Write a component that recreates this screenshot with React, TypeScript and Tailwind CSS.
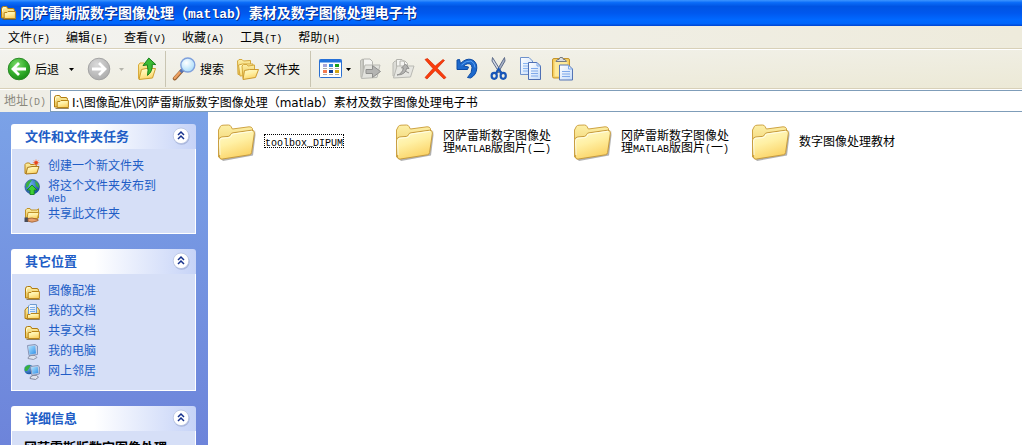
import React from 'react';

interface TextProps {
  children: string;
  latin?: string;
}

// Han characters keep the inherited font, Latin runs use a half-width monospace
const Text: React.FC<TextProps> = ({ children, latin = 'text-[10px]' }) => (
  <>
    {children.split(/([\x21-\x7e]+)/).map((part, i) =>
      i % 2 === 1 ? (
        <span key={i} className={`font-['Liberation_Mono',monospace] leading-[0px] ${latin}`}>{part}</span>
      ) : (
        part
      )
    )}
  </>
);

const Gradients: React.FC = () => (
  <svg className="absolute size-0" aria-hidden="true">
    <defs>
      <linearGradient id="folderFront" x1="0" y1="0" x2="0.4" y2="1">
        <stop offset="0" stopColor="#fffbd0" />
        <stop offset="0.5" stopColor="#fff0a4" />
        <stop offset="1" stopColor="#fbd468" />
      </linearGradient>
      <linearGradient id="folderBack" x1="0" y1="0" x2="0" y2="1">
        <stop offset="0" stopColor="#fdf0a8" />
        <stop offset="1" stopColor="#e9bf4c" />
      </linearGradient>
      <radialGradient id="green" cx="0.4" cy="0.3" r="0.75">
        <stop offset="0" stopColor="#7fdc6c" />
        <stop offset="0.55" stopColor="#36b02e" />
        <stop offset="1" stopColor="#158a12" />
      </radialGradient>
      <radialGradient id="grey" cx="0.4" cy="0.3" r="0.75">
        <stop offset="0" stopColor="#dadada" />
        <stop offset="1" stopColor="#aaaaaa" />
      </radialGradient>
      <radialGradient id="lens" cx="0.4" cy="0.35" r="0.7">
        <stop offset="0" stopColor="#ffffff" />
        <stop offset="1" stopColor="#a5dcfa" />
      </radialGradient>
      <linearGradient id="sheet" x1="0" y1="0" x2="1" y2="1">
        <stop offset="0" stopColor="#ffffff" />
        <stop offset="1" stopColor="#c5dcfa" />
      </linearGradient>
      <linearGradient id="screen" x1="0" y1="0" x2="1" y2="1">
        <stop offset="0" stopColor="#b4e6ff" />
        <stop offset="1" stopColor="#2f8fe8" />
      </linearGradient>
      <radialGradient id="globe" cx="0.35" cy="0.3" r="0.8">
        <stop offset="0" stopColor="#6fb4f0" />
        <stop offset="1" stopColor="#0d4698" />
      </radialGradient>
    </defs>
  </svg>
);

const LargeFolder: React.FC = () => (
  <svg className="h-[38px] w-10 shrink-0" viewBox="0 0 40 38" aria-hidden="true">
    <path d="M4 35 L34 30 L38 6 L38.5 11 L36 31.5 L6 37Z" fill="#666" opacity="0.5" />
    <path d="M1.5 33 V6 L3.5 2.2 Q4 1.4 6 1.2 L11.5 1 Q13.4 1 14.2 2.8 L15.4 5 L32 2.8 Q34.6 2.6 35.4 4.4 L36 11 L5 35Z" fill="url(#folderBack)" stroke="#cfa444" />
    <path d="M5.5 35 Q3.2 36 2.4 33 L1.5 17 Q1.4 13.5 4.6 13 L11.5 12.4 Q12.7 12.2 13.6 10.4 Q14.2 9 16 8.8 L34.5 6.2 Q37.6 6 37.4 9 L34.6 28.6 Q34.4 30.4 32.4 30.8Z" fill="url(#folderFront)" stroke="#c69a3c" />
    <path d="M3 31 L2.6 17 Q2.6 14.4 5 14.2 L12 13.6 Q14 13.4 14.8 11 Q15.3 10.1 16.4 10 L34.8 7.4" fill="none" stroke="#fffee6" />
  </svg>
);

const SmallFolder: React.FC = () => (
  <svg className="size-4 shrink-0" viewBox="0 0 16 16" aria-hidden="true">
    <path d="M1.5 14 V5 Q1.5 2.5 3.5 2.5 H6 Q7.4 2.5 7.8 4.5 H13 Q14.5 4.5 14.5 6.5 V14Z" fill="url(#folderBack)" stroke="#b07c10" />
    <path d="M2.5 7.5 V6 Q2.5 3.8 4 3.8 H6" fill="none" stroke="#fffbd2" />
    <path d="M4.2 14.5 V9 Q4.2 8.5 5 8.5 H7 L8 7.5 H15.4 V14.5Z" fill="url(#folderFront)" stroke="#b98518" />
    <path d="M2.5 15.5 H15.8" stroke="#6f5520" opacity="0.7" />
  </svg>
);

const NewFolderIcon: React.FC = () => (
  <svg className="size-4 shrink-0" viewBox="0 0 16 16" aria-hidden="true">
    <path d="M1 14.5 V5.5 L2.5 4 H5.5 L6.5 5.5 H12.5 V14Z" fill="url(#folderBack)" stroke="#b98518" />
    <path d="M2 15 L3.5 8.5 L8 7.5 H15 L12.8 14.2Z" fill="url(#folderFront)" stroke="#a87820" />
    <path d="M12 0.5 V7 M8.8 3.7 H15.4 M9.8 1.4 L14.4 6 M14.4 1.4 L9.8 6" stroke="#f09060" />
    <circle cx="12.1" cy="3.7" r="1.8" fill="#e8421c" />
  </svg>
);

const PublishIcon: React.FC = () => (
  <svg className="size-4 shrink-0" viewBox="0 0 16 16" aria-hidden="true">
    <circle cx="8.2" cy="7.8" r="7.3" fill="url(#globe)" stroke="#174a86" strokeWidth="0.6" />
    <path d="M2 5 Q4 1 8 1 L6 4 L4 8 L2 9Z M11 1.5 L14.5 5 L15 9 L12 7Z" fill="#38b040" />
    <path d="M8 6 L13 11 H10.2 V15.5 H6 V11 H3Z" fill="#3fcf35" stroke="#0f7e12" strokeWidth="0.8" />
  </svg>
);

const ShareIcon: React.FC = () => (
  <svg className="size-4 shrink-0" viewBox="0 0 16 16" aria-hidden="true">
    <path d="M1.5 11 V3 L3 1.5 H6 L7 3 H13 L14.5 1.8 V11Z" fill="url(#folderBack)" stroke="#c09228" />
    <path d="M3 11.5 L4 5.5 H15 L13.5 11.5Z" fill="url(#folderFront)" stroke="#c09228" />
    <path d="M0.5 10.5 H4 V15 H0.5Z" fill="#484c5a" />
    <path d="M4 11.5 L8 11 L14 12.5 Q15 13.5 13 14 L8 15.2 L4 14.2Z" fill="#e5a06c" stroke="#9b592b" strokeWidth="0.8" />
  </svg>
);

const DocumentsIcon: React.FC = () => (
  <svg className="size-4 shrink-0" viewBox="0 0 16 16" aria-hidden="true">
    <path d="M1 14.5 V6 L3 3.5 H13.5 L15.3 6 V14.5Z" fill="url(#folderBack)" stroke="#b07c10" />
    <path d="M4.5 11 V2 L6 0.5 H12.5 V11Z" fill="url(#sheet)" stroke="#6f9bd0" />
    <path d="M6 3.5 H11 M6 5.5 H11 M6 7.5 H11" stroke="#7fb0ea" />
    <path d="M3.5 14.5 V10.5 H6 L7 9.5 H15.3 V14.5Z" fill="url(#folderFront)" stroke="#b98518" />
    <path d="M2.5 15.5 H15.8" stroke="#6f5520" opacity="0.7" />
  </svg>
);

const ComputerIcon: React.FC = () => (
  <svg className="size-4 shrink-0" viewBox="0 0 16 16" aria-hidden="true">
    <path d="M3.5 1.5 L11 0.5 L13.5 2 V10.5 L5 11.5Z" fill="#c9d2e6" stroke="#8795b8" />
    <path d="M4.3 2.5 L11.2 1.5 L12 9.4 L5.6 10.4Z" fill="url(#screen)" />
    <path d="M7 11.5 H11 L13 13.5 L9.5 15.5 L4 14.5 L4.5 12.8Z" fill="#dde2ee" stroke="#7c849a" strokeWidth="0.8" />
  </svg>
);

const NetworkIcon: React.FC = () => (
  <svg className="size-4 shrink-0" viewBox="0 0 16 16" aria-hidden="true">
    <circle cx="5" cy="5.5" r="4.8" fill="url(#globe)" />
    <path d="M0.8 3.5 Q3 0.6 6.4 1 L5.4 4 L3 7 L1 7Z" fill="#38b040" />
    <path d="M6.5 2.5 L14 1.5 L15.4 2.8 V10 L8 11.5Z" fill="#c9d2e6" stroke="#8795b8" />
    <path d="M7.4 3.4 L13.8 2.6 L14.4 9 L8.5 10.1Z" fill="url(#screen)" />
    <path d="M9 11.4 H12.5 L14.5 13.2 L11.5 15.5 L6 14.5 L6.5 12.8Z" fill="#dde2ee" stroke="#6d7488" strokeWidth="0.8" />
  </svg>
);

const BackIcon: React.FC = () => (
  <svg className="size-6" viewBox="0 0 24 24" aria-hidden="true">
    <circle cx="12" cy="12" r="10.8" fill="url(#green)" stroke="#2c8a28" />
    <path d="M19 12 H7 M12 6 L6 12 L12 18" fill="none" stroke="#fff" strokeWidth="2.8" />
  </svg>
);

const ForwardIcon: React.FC = () => (
  <svg className="size-6" viewBox="0 0 24 24" aria-hidden="true">
    <circle cx="12" cy="12" r="10.8" fill="url(#grey)" stroke="#a4a4a4" />
    <path d="M5 12 H17 M12 6 L18 12 L12 18" fill="none" stroke="#fff" strokeWidth="2.8" />
  </svg>
);

const UpIcon: React.FC = () => (
  <svg className="size-6" viewBox="0 0 24 24" aria-hidden="true">
    <path d="M3.5 21.5 V8 L5 6 H9 L10.5 8 H17 V20Z" fill="url(#folderBack)" stroke="#d9ab3a" />
    <path d="M4 22.5 L6.5 12.5 L11 11.5 H20.5 L17.5 21Z" fill="url(#folderFront)" stroke="#cf9f30" />
    <path d="M13.8 1 L20.8 7.6 L17.2 7.2 Q17.8 14.5 12.5 18.4 Q13.8 13.5 12.2 7.8 L8 8.6Z" fill="#3cbb35" stroke="#17801a" />
  </svg>
);

const SearchIcon: React.FC = () => (
  <svg className="size-6" viewBox="0 0 24 24" aria-hidden="true">
    <path d="M10 13.5 L2.8 21.5" stroke="#97602f" strokeWidth="4" strokeLinecap="round" />
    <path d="M10 13 L2.8 21" stroke="#eda264" strokeWidth="2.4" strokeLinecap="round" />
    <path d="M11 12.5 L8.5 15.2" stroke="#5674b4" strokeWidth="3.4" />
    <circle cx="15.8" cy="8" r="7" fill="url(#lens)" stroke="#7fa0dc" strokeWidth="1.4" />
  </svg>
);

const FoldersIcon: React.FC = () => (
  <svg className="size-6" viewBox="0 0 24 24" aria-hidden="true">
    <path d="M2 17.5 L1.5 4 L3 2.5 H6 L7.5 4 L14.5 3.5 V17Z" fill="url(#folderBack)" stroke="#d5a93c" />
    <path d="M4 19 L2.5 8 L6.5 7 H17 L14 18Z" fill="url(#folderFront)" stroke="#d5a93c" />
    <path d="M7 21.5 L6 9 L7.5 7.5 H11 L12 9 L18.5 8 V20Z" fill="url(#folderBack)" stroke="#d5a93c" />
    <path d="M7 22.5 L8.5 13.5 L13.5 12.5 H22.5 L19.5 20.5Z" fill="url(#folderFront)" stroke="#cc9b30" />
  </svg>
);

const tiles = [
  { x: 4, y: 6, fill: '#a8a6d8' },
  { x: 10, y: 6, fill: '#2f86d8' },
  { x: 16, y: 6, fill: '#1ba01b' },
  { x: 4, y: 12, fill: '#f27b52' },
  { x: 10, y: 12, fill: '#0d3f9a' },
  { x: 16, y: 12, fill: '#d3a515' },
];

const ViewsIcon: React.FC = () => (
  <svg className="h-5 w-6" viewBox="0 0 24 20" aria-hidden="true">
    <rect x="0.5" y="0.5" width="22" height="18" rx="1" fill="#fff" stroke="#2a6fd0" />
    <rect x="0.5" y="0.5" width="22" height="3" fill="#2273dd" />
    {tiles.map((tile) => (
      <g key={`${tile.x}-${tile.y}`}>
        <rect x={tile.x} y={tile.y - 1} width="4" height="3" fill={tile.fill} />
        <path d={`M${tile.x} ${tile.y + 3.5} h4`} stroke="#aaa" />
      </g>
    ))}
  </svg>
);

const MoveToIcon: React.FC = () => (
  <svg className="size-6" viewBox="0 0 24 24" aria-hidden="true">
    <path d="M2 20.5 L1.5 3.5 L4 2 V19Z" fill="#d5d5cf" stroke="#b4b4ae" />
    <path d="M4.5 20 V2 H11 L13.5 4.5 V20Z" fill="#f4f4f1" stroke="#b4b4ae" />
    <path d="M2.5 21.5 L6 8 H21 L18 20.5Z" fill="#e2e2dd" stroke="#b9b9b3" />
    <path d="M7 12.5 H13.5 V8.5 L21.5 14.5 L13.5 20.5 V16.5 H7Z" fill="#b4b4b2" stroke="#8f8f8d" />
  </svg>
);

const CopyToIcon: React.FC = () => (
  <svg className="size-6" viewBox="0 0 24 24" aria-hidden="true">
    <path d="M2 19 V6 L4 4 H8 V20Z" fill="#dcdcd7" stroke="#b9b9b3" />
    <path d="M5.5 18 V2.5 H11 L13.5 5 V18Z M9 19 V4 H14 L16.5 6.5 V19Z" fill="#f4f4f1" stroke="#b4b4ae" />
    <path d="M2.5 21 L6 9 H23 L19.5 20Z" fill="#e6e6e1" stroke="#b9b9b3" />
    <path d="M6 18 Q11 17 12.5 11 L10.5 11 L14.5 7 L18 11.5 L15.7 11.2 Q14.5 18 6 18Z M14 14 L18 16" fill="#b4b4b2" stroke="#8f8f8d" />
  </svg>
);

const DeleteIcon: React.FC = () => (
  <svg className="size-6" viewBox="0 0 24 24" aria-hidden="true">
    <path d="M2 2.5 L4.5 1.5 L12.2 9 L20 2.5 L21.5 3.5 L14.2 11.2 L23 20.5 L21 22 L12.2 13.5 L4 22 L2 20.5 L10 11.5Z" fill="#fa3c0c" stroke="#d52c05" strokeWidth="0.7" />
  </svg>
);

const UndoIcon: React.FC = () => (
  <svg className="size-6" viewBox="0 0 24 24" aria-hidden="true">
    <path d="M2 3 L4.5 2.5 L5.5 6.5 Q11 1 16.5 2.5 Q22 4.5 21.8 11 Q21.5 18 15.5 21 L12.5 20.5 Q17.5 15.5 17 10.5 Q16.5 6.5 12.8 6.7 Q10.5 7 8.7 9 L13.5 10 L12.5 12.5 L2 12.5Z" fill="#1d69cc" stroke="#0b4aa4" />
    <path d="M6.5 8 Q11 3.5 16 4 Q20 6 20 10.5" fill="none" stroke="#5aa0f0" />
  </svg>
);

const CutIcon: React.FC = () => (
  <svg className="size-6" viewBox="0 0 24 24" aria-hidden="true">
    <path d="M5.5 0.5 L14.5 15 L12.5 16 L5 4Z" fill="#d3d9e6" stroke="#5d6b88" />
    <path d="M17.5 0.5 L9 15 L11 16 L18 4Z" fill="#aab4c8" stroke="#5d6b88" />
    <ellipse cx="7.2" cy="18.8" rx="2.6" ry="3" fill="none" stroke="#1856b8" strokeWidth="2.2" />
    <ellipse cx="16.2" cy="18.8" rx="2.6" ry="3" fill="none" stroke="#1856b8" strokeWidth="2.2" />
    <path d="M9 16.5 L11.7 12 L14.5 16.5" fill="none" stroke="#1856b8" strokeWidth="2" />
  </svg>
);

const CopyIcon: React.FC = () => (
  <svg className="size-6" viewBox="0 0 24 24" aria-hidden="true">
    <path d="M1.5 17.5 V0.5 H10 L13.5 4 V17.5Z" fill="url(#sheet)" stroke="#6f92cc" />
    <path d="M4 6.5 H11 M4 9 H11 M4 11.5 H11 M4 14 H11" stroke="#8ab6f2" />
    <path d="M9.5 22.5 V5.5 H18 L21.5 9 V22.5Z" fill="url(#sheet)" stroke="#4f70b4" />
    <path d="M18 5.5 V9 H21.5 M12 11.5 H19 M12 14 H19 M12 16.5 H19 M12 19 H19" fill="none" stroke="#7fa9ea" />
  </svg>
);

const PasteIcon: React.FC = () => (
  <svg className="size-6" viewBox="0 0 24 24" aria-hidden="true">
    <rect x="1.5" y="1.5" width="17" height="19.5" rx="1.5" fill="#f5cd5e" stroke="#c4952d" />
    <rect x="3.5" y="4.5" width="13" height="15" fill="#fde999" />
    <path d="M5 4.5 L6.5 2.5 H8 L9 0.5 H11.5 L12.5 2.5 H14 L15.5 4.5Z" fill="#dadde0" stroke="#777b80" />
    <path d="M8.5 23 V8 H17.5 L21.5 12 V23Z" fill="url(#sheet)" stroke="#5575b5" />
    <path d="M17.5 8 V12 H21.5 M11 14.5 H19 M11 17 H19 M11 19.5 H19" fill="none" stroke="#7fa9ea" />
  </svg>
);

const Caret: React.FC<{ className: string }> = ({ className }) => (
  <svg className={`h-[3px] w-[5px] shrink-0 ${className}`} viewBox="0 0 5 3" aria-hidden="true">
    <path d="M0 0 H5 L2.5 3Z" fill="currentColor" />
  </svg>
);

interface PanelProps {
  title: string;
  children: React.ReactNode;
}

const Panel: React.FC<PanelProps> = ({ title, children }) => (
  <section className="shrink-0">
    <div className="flex h-[25px] items-start justify-between rounded-t-[3px] bg-linear-to-r from-white from-45% to-[#c6d3f7] pt-[3px] pr-1.5 pl-3.5">
      <h2 className="text-[13px] leading-[18px] font-bold text-[#215dc6]">{title}</h2>
      <button type="button" aria-label={`收起${title}`}>
        <svg className="size-[18px]" viewBox="0 0 18 18" aria-hidden="true">
          <circle cx="9.6" cy="9.8" r="8" fill="#8d9cc8" opacity="0.6" />
          <circle cx="9" cy="8.8" r="7.8" fill="#fff" stroke="#b4c0e0" strokeWidth="0.8" />
          <path d="M6 8 L9 5 L12 8 M6 12 L9 9 L12 12" fill="none" stroke="#16318c" strokeWidth="1.5" />
        </svg>
      </button>
    </div>
    <div className="border-x border-b border-white bg-[#d6dff7] px-3 py-2.5">{children}</div>
  </section>
);

interface LinkItem {
  label: string;
  icon: React.ReactNode;
}

const LinkList: React.FC<{ items: LinkItem[] }> = ({ items }) => (
  <ul className="flex flex-col gap-1">
    {items.map((item) => (
      <li key={item.label}>
        <a href="#" className="flex min-h-4 items-start gap-2 text-xs leading-3 text-[#215dc6]">
          {item.icon}
          <span className="max-w-28">
            <Text>{item.label}</Text>
          </span>
        </a>
      </li>
    ))}
  </ul>
);

const menus = ['文件(F)', '编辑(E)', '查看(V)', '收藏(A)', '工具(T)', '帮助(H)'];

const tasks: LinkItem[] = [
  { label: '创建一个新文件夹', icon: <NewFolderIcon /> },
  { label: '将这个文件夹发布到 Web', icon: <PublishIcon /> },
  { label: '共享此文件夹', icon: <ShareIcon /> },
];

const places: LinkItem[] = [
  { label: '图像配准', icon: <SmallFolder /> },
  { label: '我的文档', icon: <DocumentsIcon /> },
  { label: '共享文档', icon: <SmallFolder /> },
  { label: '我的电脑', icon: <ComputerIcon /> },
  { label: '网上邻居', icon: <NetworkIcon /> },
];

const folders = [
  { name: 'toolbox_DIPUM', focused: true },
  { name: '冈萨雷斯数字图像处理MATLAB版图片(二)', focused: false },
  { name: '冈萨雷斯数字图像处理MATLAB版图片(一)', focused: false },
  { name: '数字图像处理教材', focused: false },
];

const App: React.FC = () => {
  return (
    <div className="flex h-screen flex-col overflow-hidden bg-white font-['Noto_Sans_CJK_SC',sans-serif] text-xs text-black">
      <Gradients />

      {/* Title bar */}
      <header className="flex h-[26px] shrink-0 items-center gap-1 bg-[linear-gradient(#3d95ff_0%,#0a6cf8_10%,#0054e3_25%,#0058ee_50%,#0068ff_75%,#0066fc_90%,#0043cf_100%)] pb-0.5">
        <SmallFolder />
        <h1 className="truncate text-sm leading-5 font-bold text-white [text-shadow:1px_1px_#0a2a86]">
          <Text latin="text-[13px]">冈萨雷斯版数字图像处理（matlab）素材及数字图像处理电子书</Text>
        </h1>
      </header>

      {/* Menu bar */}
      <nav className="flex h-[23px] shrink-0 items-center border-b border-[#d8d0b8] bg-linear-to-r from-[#f3f3f0] to-[#eeebdc]">
        {menus.map((menu) => (
          <button key={menu} type="button" className="px-2 leading-4 whitespace-nowrap">
            <Text>{menu}</Text>
          </button>
        ))}
      </nav>

      {/* Toolbar */}
      <div className="flex h-10 shrink-0 items-center border-y border-t-white border-b-[#d8d0b8] bg-linear-to-br from-[#f3f3ef] to-[#ece9d6] pl-[7px] whitespace-nowrap">
        <button type="button" className="flex items-center gap-1">
          <BackIcon />
          后退
        </button>
        <button type="button" aria-label="后退历史" className="px-2.5">
          <Caret className="text-black" />
        </button>
        <button type="button" aria-label="前进" disabled className="ml-[3px]">
          <ForwardIcon />
        </button>
        <button type="button" aria-label="前进历史" disabled className="px-2">
          <Caret className="text-[#b5b5ad]" />
        </button>
        <button type="button" aria-label="向上" className="ml-[3px]">
          <UpIcon />
        </button>
        <div className="mx-1.5 h-9 w-px bg-[#c9c5b2]" />
        <button type="button" className="flex items-center gap-1">
          <SearchIcon />
          搜索
        </button>
        <button type="button" className="ml-3 flex items-center gap-1">
          <FoldersIcon />
          文件夹
        </button>
        <div className="mr-2 ml-2.5 h-9 w-px bg-[#c9c5b2]" />
        <button type="button" aria-label="查看方式" className="flex items-center gap-[3px]">
          <ViewsIcon />
          <Caret className="text-black" />
        </button>
        <div className="ml-2 flex gap-2">
          <button type="button" aria-label="移至" disabled><MoveToIcon /></button>
          <button type="button" aria-label="复制到" disabled><CopyToIcon /></button>
          <button type="button" aria-label="删除"><DeleteIcon /></button>
          <button type="button" aria-label="撤消"><UndoIcon /></button>
          <button type="button" aria-label="剪切"><CutIcon /></button>
          <button type="button" aria-label="复制"><CopyIcon /></button>
          <button type="button" aria-label="粘贴"><PasteIcon /></button>
        </div>
      </div>

      {/* Address bar */}
      <div className="flex h-[23px] shrink-0 border-t border-white bg-[#efeee6]">
        <label htmlFor="address" className="w-[50px] shrink-0 pl-1 leading-5 text-[#8a887c]">
          <Text>地址(D)</Text>
        </label>
        <div className="flex grow items-center gap-[3px] border-y border-l border-[#7f9db9] bg-white pl-0.5">
          <SmallFolder />
          <input
            id="address"
            type="text"
            defaultValue="I:\图像配准\冈萨雷斯版数字图像处理（matlab）素材及数字图像处理电子书"
            className="h-5 w-full min-w-0 font-['DejaVu_Sans','Noto_Sans_CJK_SC',sans-serif] text-xs outline-none"
          />
        </div>
      </div>

      <div className="flex min-h-0 grow">
        <aside className="flex w-52 shrink-0 flex-col gap-[15px] overflow-hidden bg-linear-to-b from-[#7ba2e7] to-[#6d84da] pt-3 pr-3 pl-[11px]">
          <Panel title="文件和文件夹任务">
            <LinkList items={tasks} />
          </Panel>
          <Panel title="其它位置">
            <LinkList items={places} />
          </Panel>
          <Panel title="详细信息">
            <p className="text-[13px] leading-3 font-bold whitespace-nowrap">冈萨雷斯版数字图像处理</p>
          </Panel>
        </aside>

        <main className="flex grow flex-wrap content-start overflow-hidden pt-3 pl-[9px]">
          {folders.map((folder) => (
            <button key={folder.name} type="button" className="flex w-[178px] items-start gap-2 text-left leading-3">
              <LargeFolder />
              <span className="flex h-[34px] items-center">
                <span className={folder.focused ? 'outline-1 outline-dotted outline-black' : 'max-w-[110px]'}>
                  <Text>{folder.name}</Text>
                </span>
              </span>
            </button>
          ))}
        </main>
      </div>
    </div>
  );
};

export default App;
